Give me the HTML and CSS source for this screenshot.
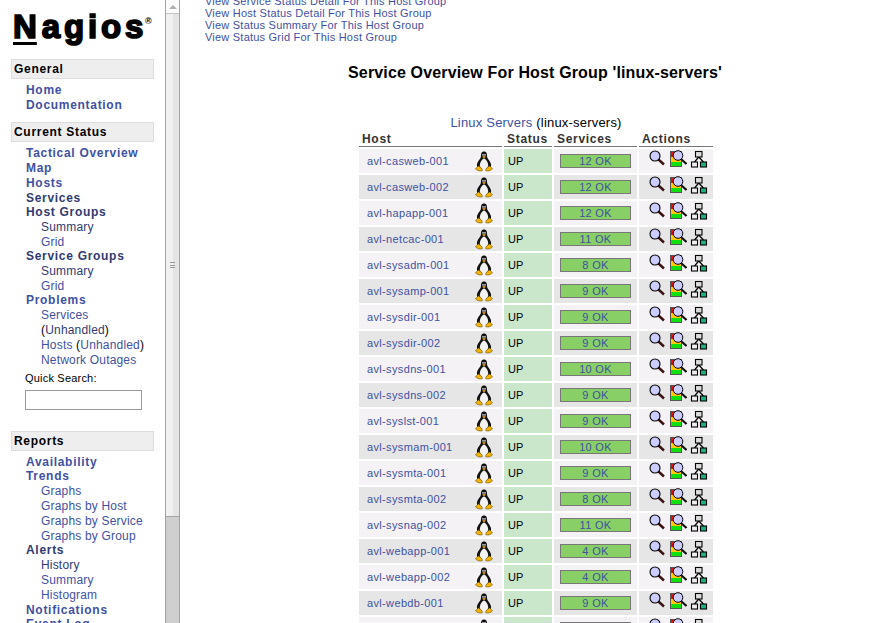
FILE: index.html
```html
<!DOCTYPE html>
<html lang="en">

<head>
    <meta charset="UTF-8">
    <title>Nagios</title>
    <link rel="stylesheet" href="styles.css">
</head>

<body>
    <svg class="defs" width="0" height="0">
        <symbol id="tux" viewBox="0 0 20 24">
            <path d="M10 .5C7 .5 6.500 3 6.500 6C6.500 9 3 11 2 15C1.500 17 2.500 19 4 20L16 20C17.500 19 18.500 17 18 15C17 11 13.500 9 13.500 6C13.500 3 13 .5 10 .5Z" fill="#111" />
            <path d="M10 8.500C8 9 5.500 12.500 5.200 16C5 19 7.500 21 10 21C12.500 21 15 19 14.800 16C14.500 12.500 12 9 10 8.500Z" fill="#f2f2f2" />
            <path d="M8.200 3.500h1.300v2h-1.300zM10.500 3.500h1.300v2h-1.300z" fill="#fff" />
            <path d="M7.800 6.500L10 5.800L12.200 6.500L10 8.300Z" fill="#e8a800" />
            <path d="M3.500 17C2 18.500 .8 19.300 .3 20.500C2 22.300 5.500 23.500 8 22.500C8.500 20.500 6 18 3.500 17Z" fill="#f2b200" stroke="#5a4500" stroke-width=".6" />
            <path d="M16.500 17C18 18.500 19.200 19.300 19.700 20.500C18 22.300 14.500 23.500 12 22.500C11.500 20.500 14 18 16.500 17Z" fill="#f2b200" stroke="#5a4500" stroke-width=".6" />
        </symbol>
        <symbol id="lens" viewBox="0 0 16 16">
            <path d="M9.500 9.500L15 14.500" stroke="#3a1010" stroke-width="2.400" />
            <circle cx="6" cy="6" r="5" fill="#ccccff" stroke="#000" stroke-width="1.100" />
        </symbol>
        <symbol id="status" viewBox="0 0 17 18">
            <rect x="0" y="1" width="12" height="16" fill="#555" />
            <rect x="1" y="2" width="3" height="5" fill="#e81010" />
            <rect x="1" y="7" width="10" height="5" fill="#ffc800" />
            <rect x="1" y="12" width="10" height="4" fill="#10e010" />
            <path d="M11 9L16.500 14" stroke="#111" stroke-width="2.200" />
            <circle cx="8" cy="5.500" r="4.800" fill="#ccccff" stroke="#000" stroke-width="1" />
        </symbol>
        <symbol id="map" viewBox="0 0 18 18">
            <path d="M8.750 7L4.500 12M8.750 7L13.500 12" stroke="#000" stroke-width="1.200" fill="none" />
            <rect x="5.500" y="1.500" width="6.500" height="5.500" fill="#ddd" stroke="#000" stroke-width="1.100" />
            <rect x="1.500" y="12" width="6" height="5" fill="#eee" stroke="#000" stroke-width="1.100" />
            <rect x="10.500" y="12" width="6" height="5" fill="#20b080" stroke="#000" stroke-width="1.100" />
        </symbol>
    </svg>

    <div class="page">
        <div class="side">
            <div class="side-inner">
                <div class="logo"><span class="logo-n">N</span>agios<sup class="logo-r">®</sup></div>

                <div class="nav-head">General</div>
                <ul class="nav">
                    <li class="main"><a href="#">Home</a></li>
                    <li class="main"><a href="#">Documentation</a></li>
                </ul>

                <div class="nav-head">Current Status</div>
                <ul class="nav">
                    <li class="main"><a href="#">Tactical Overview</a></li>
                    <li class="main"><a href="#">Map</a></li>
                    <li class="main"><a href="#">Hosts</a></li>
                    <li class="main"><a class="seen" href="#">Services</a></li>
                    <li class="main after"><a class="seen" href="#">Host Groups</a></li>
                    <li class="sub"><a class="seen" href="#">Summary</a></li>
                    <li class="sub"><a href="#">Grid</a></li>
                    <li class="main after"><a class="seen" href="#">Service Groups</a></li>
                    <li class="sub"><a class="seen" href="#">Summary</a></li>
                    <li class="sub"><a href="#">Grid</a></li>
                    <li class="main after"><a href="#">Problems</a></li>
                    <li class="sub"><a href="#">Services</a></li>
                    <li class="sub">(<a class="seen" href="#">Unhandled</a>)</li>
                    <li class="sub"><a href="#">Hosts</a> (<a href="#">Unhandled</a>)</li>
                    <li class="sub"><a href="#">Network Outages</a></li>
                </ul>
                <div class="search">
                    <label class="search-label" for="q">Quick Search:</label>
                    <input class="search-box" id="q" type="text">
                </div>

                <div class="nav-head">Reports</div>
                <ul class="nav">
                    <li class="main"><a href="#">Availability</a></li>
                    <li class="main after"><a href="#">Trends</a></li>
                    <li class="sub"><a href="#">Graphs</a></li>
                    <li class="sub"><a href="#">Graphs by Host</a></li>
                    <li class="sub"><a href="#">Graphs by Service</a></li>
                    <li class="sub"><a href="#">Graphs by Group</a></li>
                    <li class="main after"><a class="seen" href="#">Alerts</a></li>
                    <li class="sub"><a class="seen" href="#">History</a></li>
                    <li class="sub"><a href="#">Summary</a></li>
                    <li class="sub"><a href="#">Histogram</a></li>
                    <li class="main"><a href="#">Notifications</a></li>
                    <li class="main after"><a href="#">Event Log</a></li>
                </ul>
            </div>
            <div class="scrollbar">
                <div class="sb-up"></div>
                <div class="sb-thumb"><span class="sb-grip"></span></div>
                <div class="sb-trough"></div>
            </div>
        </div>

        <div class="content">
            <ul class="links">
                <li><a href="#">View Service Status Detail For This Host Group</a></li>
                <li><a href="#">View Host Status Detail For This Host Group</a></li>
                <li><a href="#">View Status Summary For This Host Group</a></li>
                <li><a href="#">View Status Grid For This Host Group</a></li>
            </ul>

            <h1 class="title">Service Overview For Host Group 'linux-servers'</h1>

            <div class="group-name"><a href="#">Linux Servers</a> (linux-servers)</div>

            <table class="hosts">
                <thead>
                    <tr><th>Host</th><th>Status</th><th>Services</th><th>Actions</th></tr>
                </thead>
                <tbody>
                    <tr class="odd"><td class="host"><div class="host-in"><a href="#">avl-casweb-001</a><svg class="tux"><use href="#tux" /></svg></div></td><td class="up">UP</td><td class="svc"><div class="bar"><a href="#">12 OK</a></div></td><td class="acts"><div class="acts-in"><svg class="i-lens"><use href="#lens" /></svg><svg class="i-st"><use href="#status" /></svg><svg class="i-map"><use href="#map" /></svg></div></td></tr>
                    <tr class="even"><td class="host"><div class="host-in"><a href="#">avl-casweb-002</a><svg class="tux"><use href="#tux" /></svg></div></td><td class="up">UP</td><td class="svc"><div class="bar"><a href="#">12 OK</a></div></td><td class="acts"><div class="acts-in"><svg class="i-lens"><use href="#lens" /></svg><svg class="i-st"><use href="#status" /></svg><svg class="i-map"><use href="#map" /></svg></div></td></tr>
                    <tr class="odd"><td class="host"><div class="host-in"><a href="#">avl-hapapp-001</a><svg class="tux"><use href="#tux" /></svg></div></td><td class="up">UP</td><td class="svc"><div class="bar"><a href="#">12 OK</a></div></td><td class="acts"><div class="acts-in"><svg class="i-lens"><use href="#lens" /></svg><svg class="i-st"><use href="#status" /></svg><svg class="i-map"><use href="#map" /></svg></div></td></tr>
                    <tr class="even"><td class="host"><div class="host-in"><a href="#">avl-netcac-001</a><svg class="tux"><use href="#tux" /></svg></div></td><td class="up">UP</td><td class="svc"><div class="bar"><a href="#">11 OK</a></div></td><td class="acts"><div class="acts-in"><svg class="i-lens"><use href="#lens" /></svg><svg class="i-st"><use href="#status" /></svg><svg class="i-map"><use href="#map" /></svg></div></td></tr>
                    <tr class="odd"><td class="host"><div class="host-in"><a href="#">avl-sysadm-001</a><svg class="tux"><use href="#tux" /></svg></div></td><td class="up">UP</td><td class="svc"><div class="bar"><a href="#">8 OK</a></div></td><td class="acts"><div class="acts-in"><svg class="i-lens"><use href="#lens" /></svg><svg class="i-st"><use href="#status" /></svg><svg class="i-map"><use href="#map" /></svg></div></td></tr>
                    <tr class="even"><td class="host"><div class="host-in"><a href="#">avl-sysamp-001</a><svg class="tux"><use href="#tux" /></svg></div></td><td class="up">UP</td><td class="svc"><div class="bar"><a href="#">9 OK</a></div></td><td class="acts"><div class="acts-in"><svg class="i-lens"><use href="#lens" /></svg><svg class="i-st"><use href="#status" /></svg><svg class="i-map"><use href="#map" /></svg></div></td></tr>
                    <tr class="odd"><td class="host"><div class="host-in"><a href="#">avl-sysdir-001</a><svg class="tux"><use href="#tux" /></svg></div></td><td class="up">UP</td><td class="svc"><div class="bar"><a href="#">9 OK</a></div></td><td class="acts"><div class="acts-in"><svg class="i-lens"><use href="#lens" /></svg><svg class="i-st"><use href="#status" /></svg><svg class="i-map"><use href="#map" /></svg></div></td></tr>
                    <tr class="even"><td class="host"><div class="host-in"><a href="#">avl-sysdir-002</a><svg class="tux"><use href="#tux" /></svg></div></td><td class="up">UP</td><td class="svc"><div class="bar"><a href="#">9 OK</a></div></td><td class="acts"><div class="acts-in"><svg class="i-lens"><use href="#lens" /></svg><svg class="i-st"><use href="#status" /></svg><svg class="i-map"><use href="#map" /></svg></div></td></tr>
                    <tr class="odd"><td class="host"><div class="host-in"><a href="#">avl-sysdns-001</a><svg class="tux"><use href="#tux" /></svg></div></td><td class="up">UP</td><td class="svc"><div class="bar"><a href="#">10 OK</a></div></td><td class="acts"><div class="acts-in"><svg class="i-lens"><use href="#lens" /></svg><svg class="i-st"><use href="#status" /></svg><svg class="i-map"><use href="#map" /></svg></div></td></tr>
                    <tr class="even"><td class="host"><div class="host-in"><a href="#">avl-sysdns-002</a><svg class="tux"><use href="#tux" /></svg></div></td><td class="up">UP</td><td class="svc"><div class="bar"><a href="#">9 OK</a></div></td><td class="acts"><div class="acts-in"><svg class="i-lens"><use href="#lens" /></svg><svg class="i-st"><use href="#status" /></svg><svg class="i-map"><use href="#map" /></svg></div></td></tr>
                    <tr class="odd"><td class="host"><div class="host-in"><a href="#">avl-syslst-001</a><svg class="tux"><use href="#tux" /></svg></div></td><td class="up">UP</td><td class="svc"><div class="bar"><a href="#">9 OK</a></div></td><td class="acts"><div class="acts-in"><svg class="i-lens"><use href="#lens" /></svg><svg class="i-st"><use href="#status" /></svg><svg class="i-map"><use href="#map" /></svg></div></td></tr>
                    <tr class="even"><td class="host"><div class="host-in"><a href="#">avl-sysmam-001</a><svg class="tux"><use href="#tux" /></svg></div></td><td class="up">UP</td><td class="svc"><div class="bar"><a href="#">10 OK</a></div></td><td class="acts"><div class="acts-in"><svg class="i-lens"><use href="#lens" /></svg><svg class="i-st"><use href="#status" /></svg><svg class="i-map"><use href="#map" /></svg></div></td></tr>
                    <tr class="odd"><td class="host"><div class="host-in"><a href="#">avl-sysmta-001</a><svg class="tux"><use href="#tux" /></svg></div></td><td class="up">UP</td><td class="svc"><div class="bar"><a href="#">9 OK</a></div></td><td class="acts"><div class="acts-in"><svg class="i-lens"><use href="#lens" /></svg><svg class="i-st"><use href="#status" /></svg><svg class="i-map"><use href="#map" /></svg></div></td></tr>
                    <tr class="even"><td class="host"><div class="host-in"><a href="#">avl-sysmta-002</a><svg class="tux"><use href="#tux" /></svg></div></td><td class="up">UP</td><td class="svc"><div class="bar"><a href="#">8 OK</a></div></td><td class="acts"><div class="acts-in"><svg class="i-lens"><use href="#lens" /></svg><svg class="i-st"><use href="#status" /></svg><svg class="i-map"><use href="#map" /></svg></div></td></tr>
                    <tr class="odd"><td class="host"><div class="host-in"><a href="#">avl-sysnag-002</a><svg class="tux"><use href="#tux" /></svg></div></td><td class="up">UP</td><td class="svc"><div class="bar"><a href="#">11 OK</a></div></td><td class="acts"><div class="acts-in"><svg class="i-lens"><use href="#lens" /></svg><svg class="i-st"><use href="#status" /></svg><svg class="i-map"><use href="#map" /></svg></div></td></tr>
                    <tr class="even"><td class="host"><div class="host-in"><a href="#">avl-webapp-001</a><svg class="tux"><use href="#tux" /></svg></div></td><td class="up">UP</td><td class="svc"><div class="bar"><a href="#">4 OK</a></div></td><td class="acts"><div class="acts-in"><svg class="i-lens"><use href="#lens" /></svg><svg class="i-st"><use href="#status" /></svg><svg class="i-map"><use href="#map" /></svg></div></td></tr>
                    <tr class="odd"><td class="host"><div class="host-in"><a href="#">avl-webapp-002</a><svg class="tux"><use href="#tux" /></svg></div></td><td class="up">UP</td><td class="svc"><div class="bar"><a href="#">4 OK</a></div></td><td class="acts"><div class="acts-in"><svg class="i-lens"><use href="#lens" /></svg><svg class="i-st"><use href="#status" /></svg><svg class="i-map"><use href="#map" /></svg></div></td></tr>
                    <tr class="even"><td class="host"><div class="host-in"><a href="#">avl-webdb-001</a><svg class="tux"><use href="#tux" /></svg></div></td><td class="up">UP</td><td class="svc"><div class="bar"><a href="#">9 OK</a></div></td><td class="acts"><div class="acts-in"><svg class="i-lens"><use href="#lens" /></svg><svg class="i-st"><use href="#status" /></svg><svg class="i-map"><use href="#map" /></svg></div></td></tr>
                    <tr class="odd"><td class="host"><div class="host-in"><a href="#">avl-webdb-002</a><svg class="tux"><use href="#tux" /></svg></div></td><td class="up">UP</td><td class="svc"><div class="bar"><a href="#">9 OK</a></div></td><td class="acts"><div class="acts-in"><svg class="i-lens"><use href="#lens" /></svg><svg class="i-st"><use href="#status" /></svg><svg class="i-map"><use href="#map" /></svg></div></td></tr>
                </tbody>
            </table>
        </div>
    </div>
</body>

</html>
```
FILE: styles.css
```css
* {
    padding: 0;
    margin: 0;
    box-sizing: border-box;
}

html,
body {
    height: 100%;
    overflow: hidden;
    background: #fff;
}

body {
    font-family: "Liberation Sans", Arial, sans-serif;
    font-size: 12px;
    color: #000;
}

a {
    color: #3f51a3;
    text-decoration: none;
}

ul {
    list-style: none;
}

.defs {
    position: absolute;
}

.page {
    display: flex;
    height: 623px;
    overflow: hidden;
}

/* left frame */
.side {
    display: flex;
    flex: 0 0 180px;
    height: 623px;
    overflow: hidden;
}

.side-inner {
    flex: 0 0 165px;
    padding-left: 11px;
    overflow: hidden;
}

.logo {
    height: 59px;
    margin-left: 2px;
    padding-top: 4px;
    font-size: 33px;
    line-height: 46px;
    font-weight: bold;
    letter-spacing: 3.8px;
    white-space: nowrap;
    -webkit-text-stroke: 1.7px #000;
}

.logo-n {
    margin-right: 5px;
    letter-spacing: 0;
    text-decoration: underline;
    text-decoration-thickness: 3px;
    text-underline-offset: 4px;
    text-decoration-skip-ink: none;
}

.logo-r {
    margin-left: -2px;
    font-size: 9px;
    line-height: 0;
    vertical-align: 14px;
    letter-spacing: 0;
    -webkit-text-stroke: 0;
}

.nav-head {
    width: 143px;
    height: 20px;
    padding-left: 2px;
    border: 1px solid #ddd;
    background: #eee;
    font-size: 12px;
    line-height: 18px;
    font-weight: bold;
    letter-spacing: .7px;
}

.nav {
    padding: 4px 0 9px 15px;
}

.nav li {
    height: 15px;
    line-height: 15px;
    white-space: nowrap;
}

.main {
    font-weight: bold;
    letter-spacing: .7px;
}

.main.after {
    margin-top: -1px;
}

.sub {
    padding-left: 15px;
    letter-spacing: .18px;
}

.nav .seen {
    color: #2f3a72;
}

.search {
    margin: -6px 0 21px 14px;
}

.search-label {
    display: block;
    height: 19px;
    font-size: 11px;
    line-height: 15px;
    letter-spacing: .2px;
}

.search-box {
    display: block;
    width: 117px;
    height: 20px;
    border: 1px solid #999;
    background: #fff;
}

/* scrollbar drawn by hand, the frame scrolls in the original */
.scrollbar {
    display: flex;
    flex: 0 0 15px;
    flex-direction: column;
    height: 623px;
    border-left: 1px solid #a3a3a3;
    border-right: 1px solid #a3a3a3;
    background: #cfcfcf;
}

.sb-up {
    flex: 0 0 14px;
    position: relative;
    border-bottom: 1px solid #c4c4c4;
    background: #fbfbfb;
}

.sb-up::after {
    content: "";
    position: absolute;
    left: 3px;
    top: 5px;
    border-left: 4px solid transparent;
    border-right: 4px solid transparent;
    border-bottom: 4px solid #b0b0b0;
}

.sb-thumb {
    display: flex;
    align-items: center;
    justify-content: center;
    flex: 0 0 503px;
    border-bottom: 1px solid #a3a3a3;
    background: linear-gradient(to right, #f0f0f0 0, #f0f0f0 7px, #e4e4e4 7px);
}

.sb-grip {
    display: block;
    width: 5px;
    height: 6px;
    border-top: 1px solid #999;
    border-bottom: 1px solid #999;
    background: linear-gradient(#999, #999) center / 100% 1px no-repeat;
}

.sb-trough {
    flex: 1;
}

/* right frame */
.content {
    flex: 1;
    min-width: 0;
    height: 623px;
    padding-left: 14px;
    overflow: hidden;
}

.links {
    margin-top: -5px;
    padding-left: 11px;
    font-size: 11px;
    line-height: 12px;
    letter-spacing: .22px;
}

.title {
    margin-top: 20px;
    padding-right: 2px;
    font-size: 16px;
    line-height: 20px;
    font-weight: bold;
    letter-spacing: .15px;
    text-align: center;
}

.group-name {
    height: 16px;
    margin-top: 32px;
    font-size: 13px;
    line-height: 15px;
    letter-spacing: .2px;
    text-align: center;
}

.hosts {
    width: 358px;
    margin: 0 auto;
    border-collapse: separate;
    border-spacing: 2px;
    table-layout: fixed;
    font-size: 11px;
}

.hosts th {
    height: 14px;
    padding-left: 3px;
    border-bottom: 1px solid #777;
    font-size: 12px;
    line-height: 13px;
    font-weight: bold;
    letter-spacing: .7px;
    text-align: left;
    color: #333;
}

.hosts th:nth-child(1) {
    width: 143px;
}

.hosts th:nth-child(2) {
    width: 48px;
}

.hosts th:nth-child(3) {
    width: 83px;
}

.hosts td {
    height: 24px;
    vertical-align: middle;
}

.odd .host,
.odd .svc,
.odd .acts {
    background: #f4f2f4;
}

.even .host,
.even .svc,
.even .acts {
    background: #e6e6e6;
}

.host-in {
    display: flex;
    align-items: center;
    justify-content: space-between;
    height: 24px;
    padding: 0 9px 0 8px;
    letter-spacing: .35px;
}

.tux {
    display: block;
    width: 18px;
    height: 21px;
}

.hosts .up {
    padding-left: 4px;
    background: #cbe7cb;
}

.bar {
    width: 71px;
    height: 14px;
    margin-left: 6px;
    border: 1px solid #777;
    background: #88d066;
    line-height: 12px;
    letter-spacing: .3px;
    text-align: center;
}

.acts-in {
    display: flex;
    align-items: flex-start;
    height: 24px;
    padding: 1px 0 0 10px;
}

.i-lens {
    display: block;
    width: 16px;
    height: 16px;
}

.i-st {
    display: block;
    width: 17px;
    height: 18px;
    margin-left: 5px;
}

.i-map {
    display: block;
    width: 18px;
    height: 18px;
    margin-left: 3px;
}
```
